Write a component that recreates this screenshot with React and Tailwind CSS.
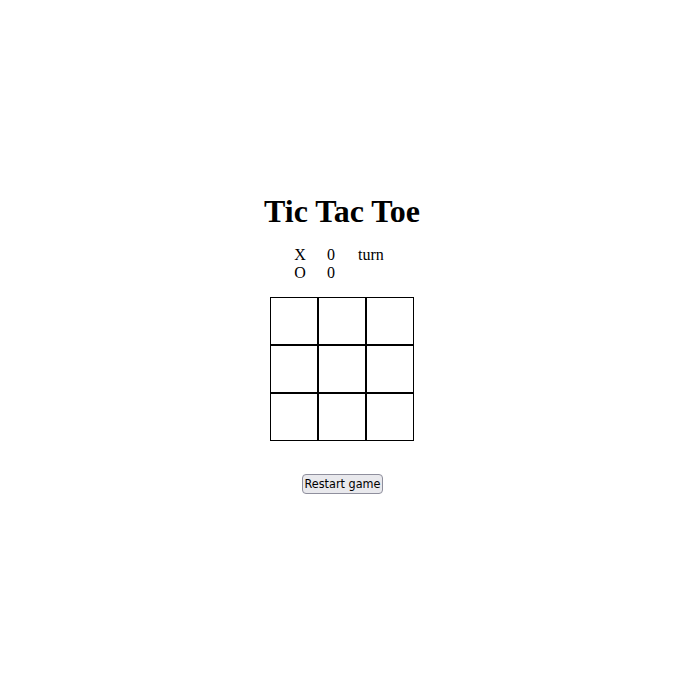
import React, { useState } from "react";

const SERIF = "font-['Liberation_Serif','Times_New_Roman',serif]";

function Cell({ value, onClick }) {
  return (
    <button
      onClick={onClick}
      className={`w-12 h-12 border border-black bg-white p-0 text-2xl ${SERIF}`}
    >
      {value}
    </button>
  );
}

export default function App() {
  const [cells, setCells] = useState(Array(9).fill(null));
  const [xTurn, setXTurn] = useState(true);
  const [score] = useState({ X: 0, O: 0 });

  const play = (i) => {
    if (cells[i]) return;
    const next = [...cells];
    next[i] = xTurn ? "X" : "O";
    setCells(next);
    setXTurn(!xTurn);
  };

  const restart = () => {
    setCells(Array(9).fill(null));
    setXTurn(true);
  };

  return (
    <div className={`h-screen pt-[5px] pl-[2px] flex flex-col items-center justify-center bg-white text-black ${SERIF}`}>
      <h1 className="text-[32px] font-bold leading-[37px] mb-[16px]">Tic Tac Toe</h1>

      {/* score */}
      <div className="text-base leading-[18px] mb-[15px]">
        {["X", "O"].map((p) => (
          <div key={p} className="flex">
            <span className="w-[32px] text-center">{p}</span>
            <span className="w-[30px] text-center">{score[p]}</span>
            <span className="w-[54px] pl-[12px]">
              {(xTurn ? "X" : "O") === p ? "turn" : ""}
            </span>
          </div>
        ))}
      </div>

      {/* board */}
      <div className="grid grid-cols-[repeat(3,48px)]">
        {cells.map((v, i) => (
          <Cell key={i} value={v} onClick={() => play(i)} />
        ))}
      </div>

      <button
        onClick={restart}
        className="mt-[33px] ml-[1px] px-[2px] h-[20px] leading-none text-[12.5px] font-['DejaVu_Sans_Condensed','DejaVu_Sans',sans-serif] bg-[#e9e9ed] border border-[#8f8f9d] rounded-[4px]"
      >
        Restart game
      </button>
    </div>
  );
}
